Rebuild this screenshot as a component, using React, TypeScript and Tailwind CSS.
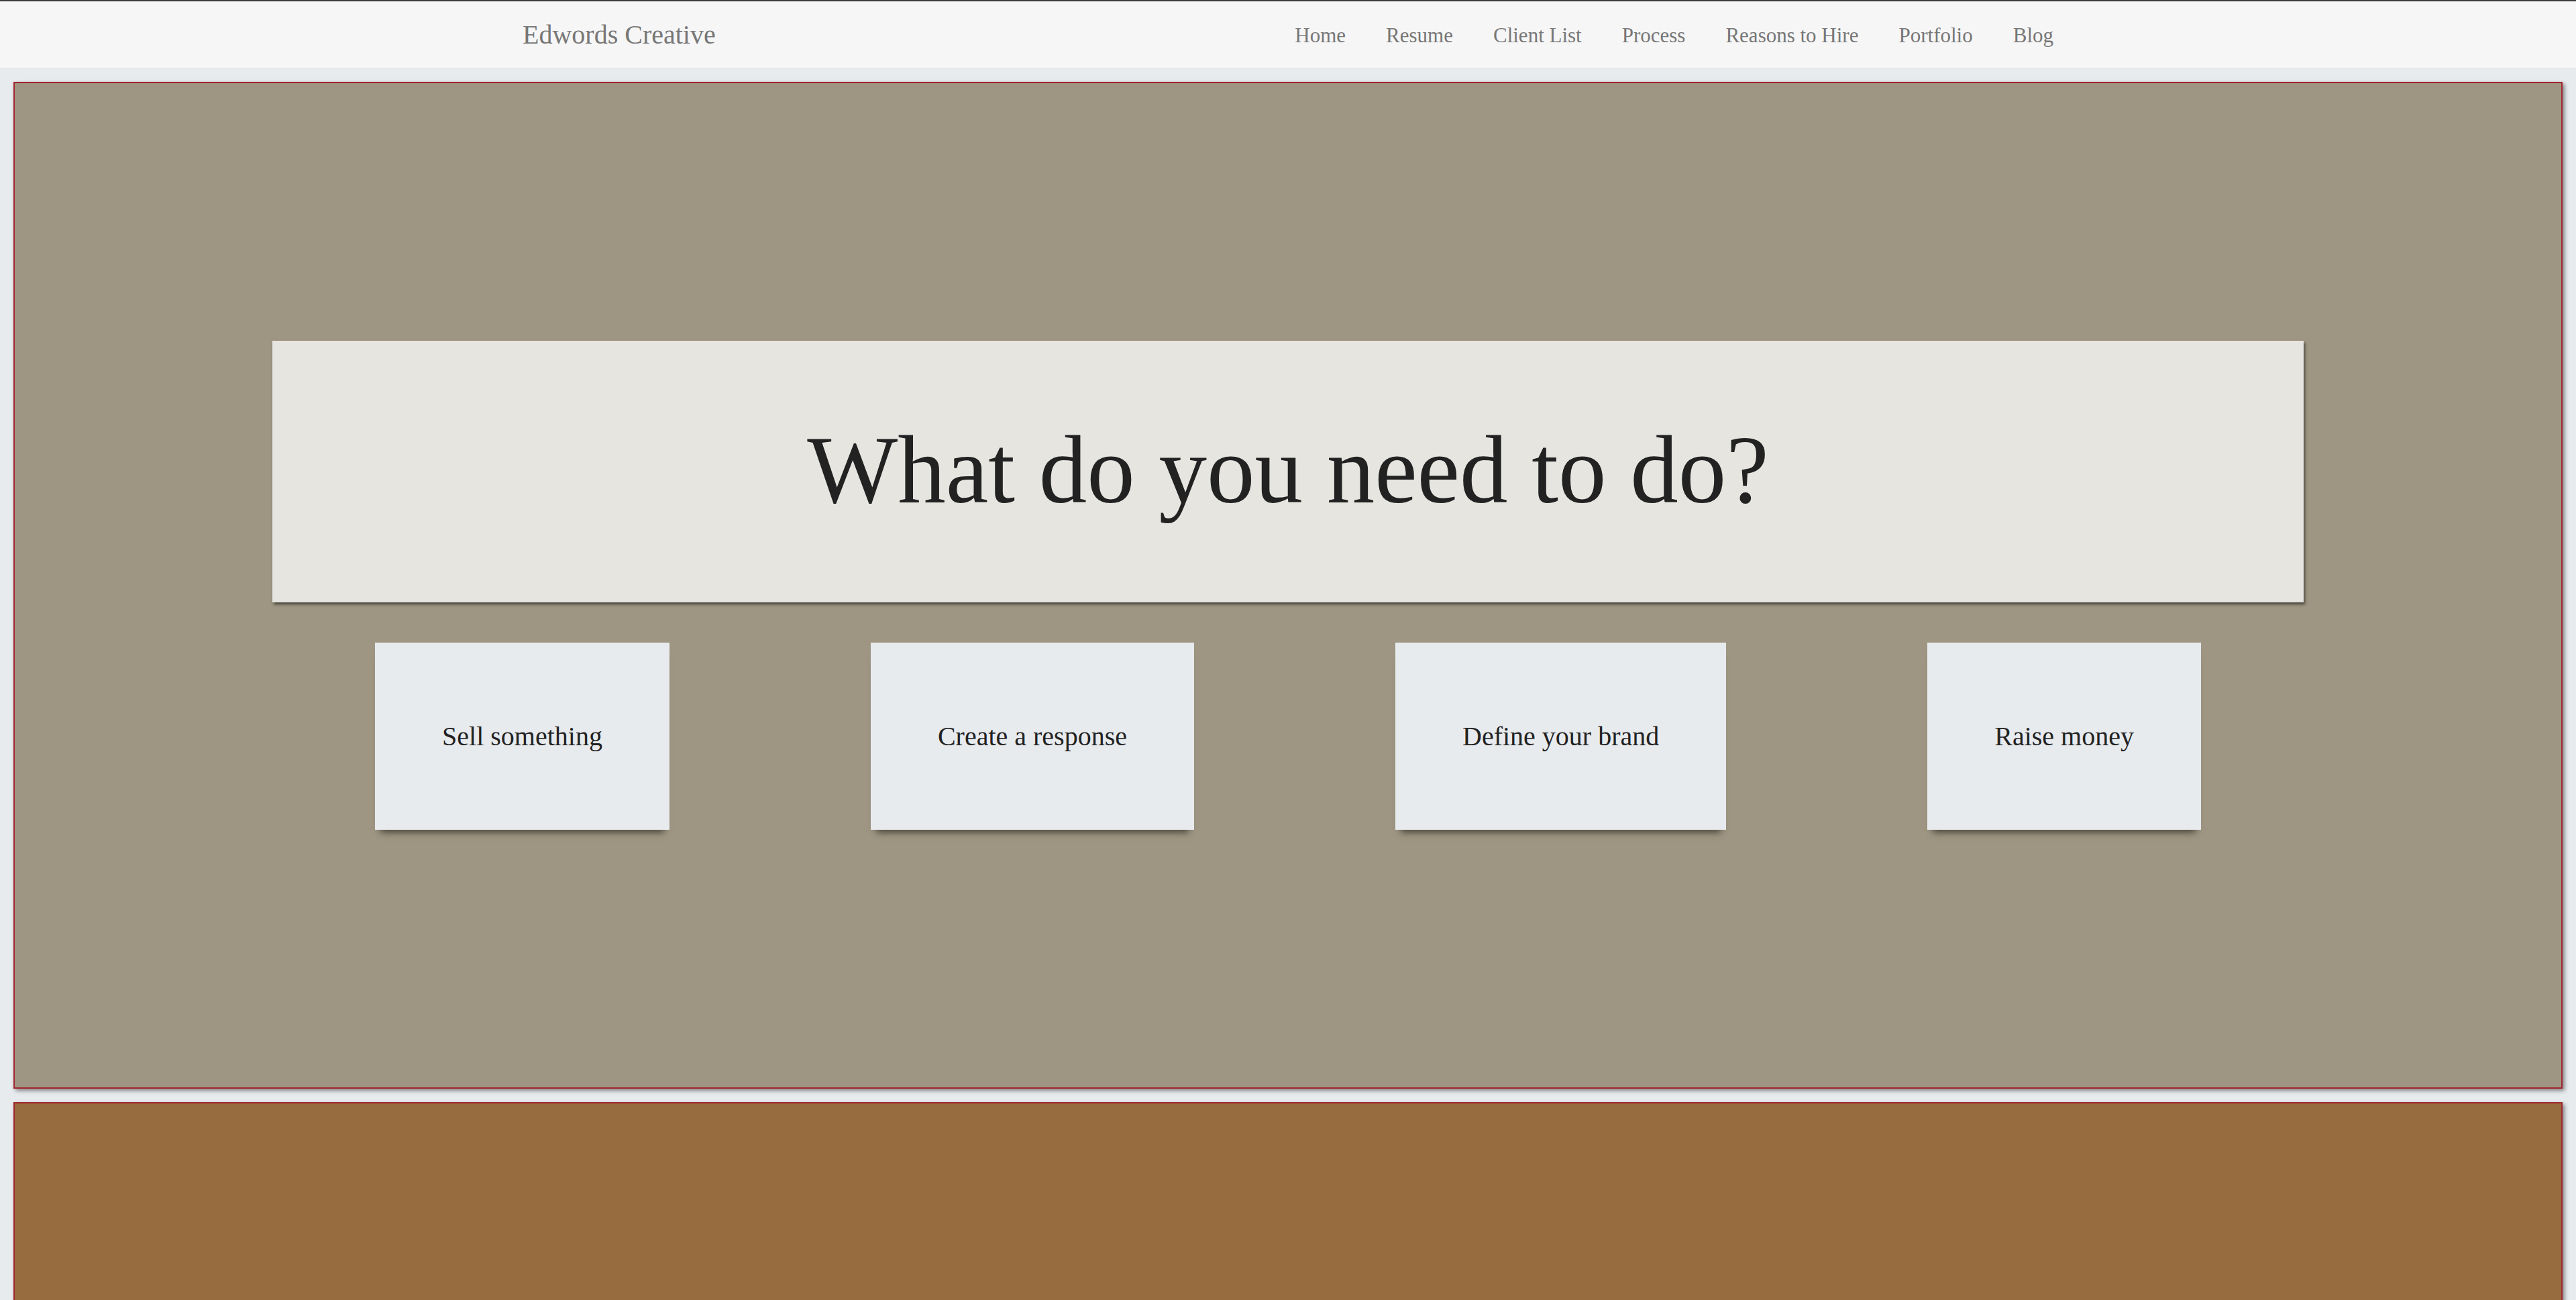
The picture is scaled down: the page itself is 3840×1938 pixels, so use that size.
import React from 'react';

const links = ['Home', 'Resume', 'Client List', 'Process', 'Reasons to Hire', 'Portfolio', 'Blog'];
const tasks = ['Sell something', 'Create a response', 'Define your brand', 'Raise money'];

export default function App() {
  return (
    <div className="min-h-screen bg-[#e8ebee] font-['Liberation_Serif',serif]">
      {/* top bar */}
      <header className="h-[102px] border-t-2 border-[#3b3b3b] bg-[#f6f6f6] border-b border-b-[#e2e2e2]">
        <div className="mx-auto flex h-full w-[2282px] items-center justify-between">
          <span className="text-[40px] leading-none text-[#777]">Edwords Creative</span>
          <nav className="flex gap-[60px] pt-[2px]">
            {links.map((l) => (
              <a key={l} className="text-[31px] leading-none text-[#777]">
                {l}
              </a>
            ))}
          </nav>
        </div>
      </header>

      <main className="flex flex-col gap-[20px] p-[20px] pb-0">
        {/* question panel */}
        <section className="flex h-[1501px] flex-col items-center justify-center gap-[60px] border-2 border-[#a3262d] bg-[#9e9682] shadow-[3px_3px_6px_rgba(0,0,0,0.45)]">
          <div className="flex h-[390px] w-[3028px] items-center justify-center bg-[#e6e5e0] shadow-[2px_3px_4px_rgba(0,0,0,0.55)]">
            <h1 className="text-[143px] leading-none text-[#222] pb-[4px]">What do you need to do?</h1>
          </div>
          <div className="flex gap-[300px]">
            {tasks.map((t) => (
              <div
                key={t}
                className="flex h-[279px] items-center justify-center bg-[#e8ebee] px-[100px] shadow-[0_12px_10px_-8px_rgba(0,0,0,0.55)]"
              >
                <span className="text-[40px] leading-none text-[#222]">{t}</span>
              </div>
            ))}
          </div>
        </section>

        {/* next panel */}
        <section className="h-[1400px] border-2 border-[#a3262d] bg-[#976c3f] shadow-[3px_3px_6px_rgba(0,0,0,0.45)]" />
      </main>
    </div>
  );
}
